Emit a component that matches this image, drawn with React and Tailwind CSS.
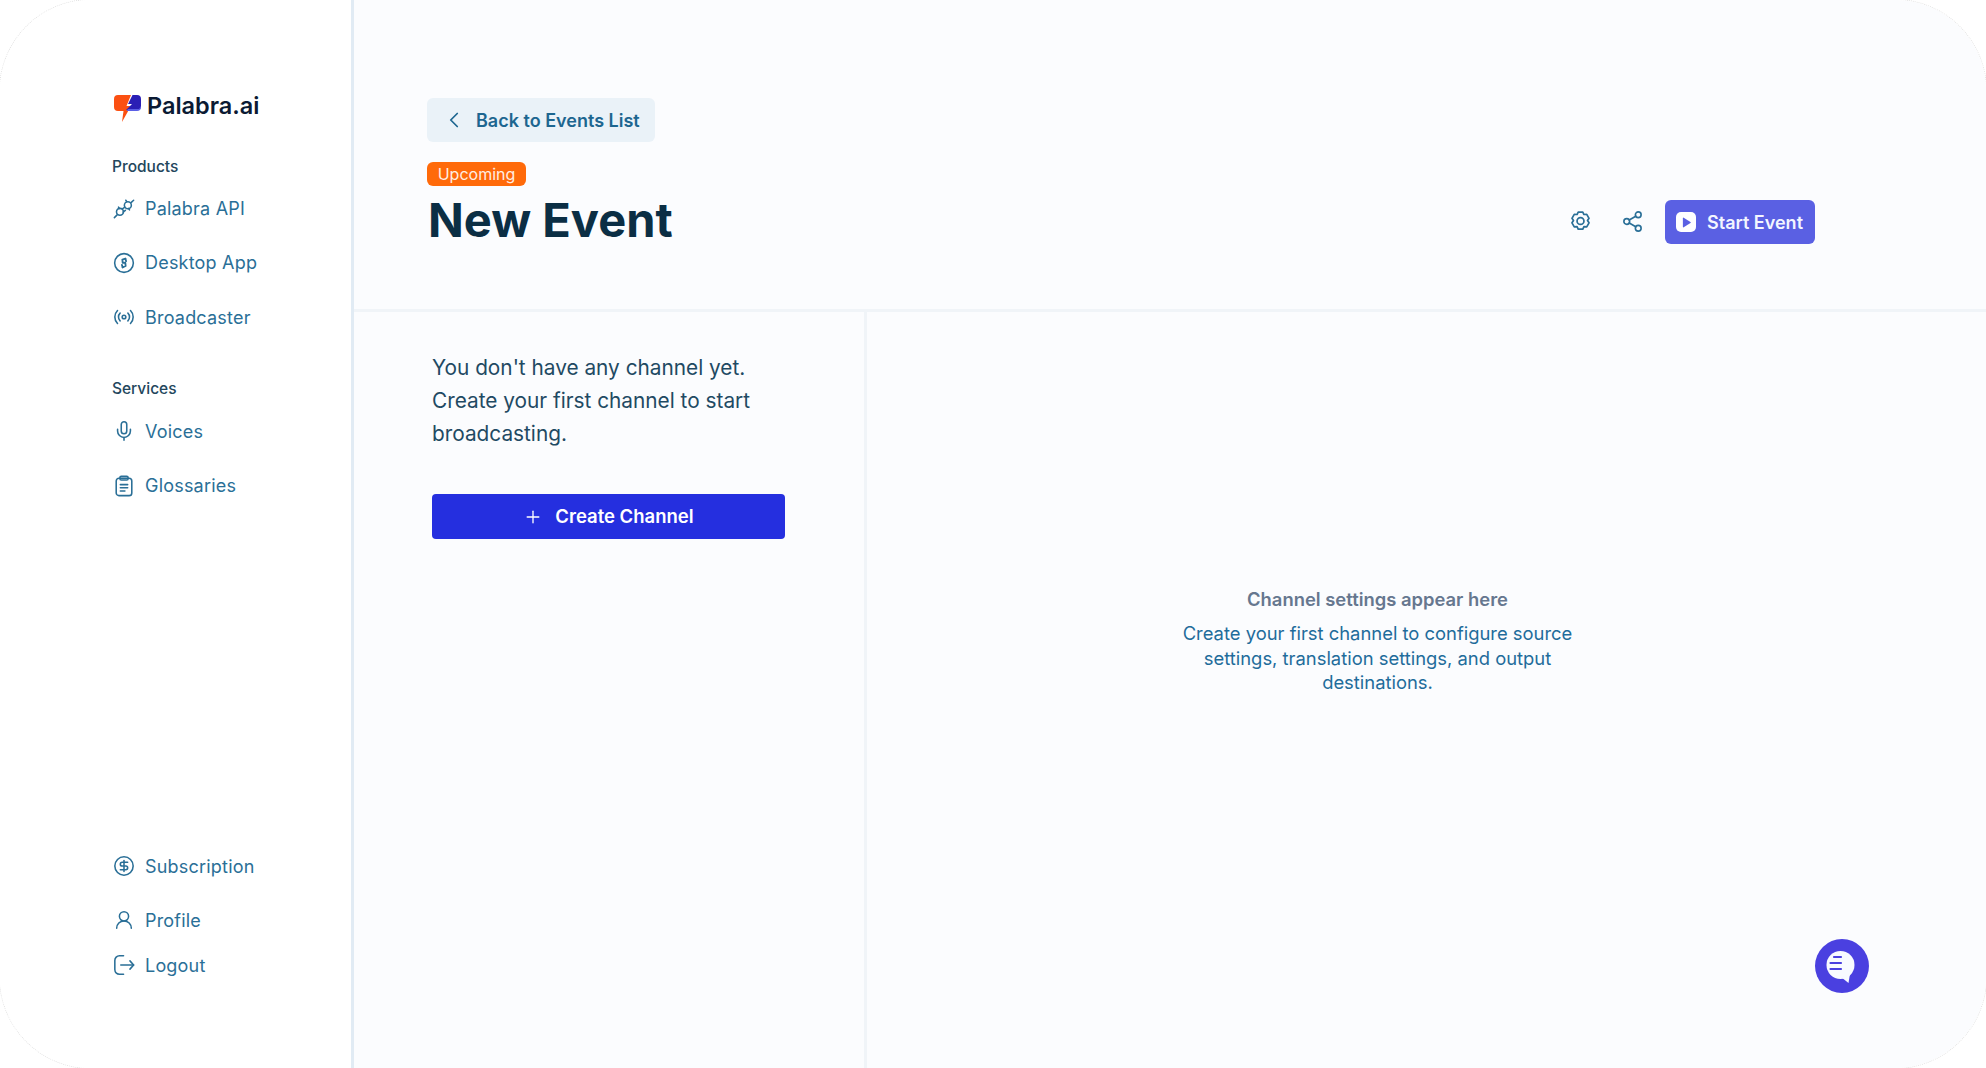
import React from "react";
import { ChevronLeft, Plus, Radio, Mic, CircleDollarSign, UserRound, Share2 } from "lucide-react";

const PlugIcon = (p) => (
  <svg viewBox="0 0 24 24" fill="none" stroke="currentColor" strokeWidth="1.7" strokeLinecap="round" strokeLinejoin="round" {...p}>
    <path d="M1.500 22.500l3-3" />
    <path d="M22.500 3.500l-2.800 2.600" />
    <circle cx="7.600" cy="16.200" r="3.800" />
    <circle cx="16.200" cy="9" r="3.800" />
    <path d="M10.200 13l2.800-2M11 16.500l2.500-2M6 11l1 1.500M18 14l-1-1.500M14 3.500l1 1.500" />
  </svg>
);
const DesktopIcon = (p) => (
  <svg viewBox="0 0 24 24" fill="none" stroke="currentColor" strokeWidth="1.8" strokeLinecap="round" strokeLinejoin="round" {...p}>
    <circle cx="12" cy="12" r="10.200" />
    <path d="M13.500 7.200l-3.300 1 .4 3.600 2.800-.3.400 3.800-3.300 1.400" strokeWidth="2" />
    <path d="M13.500 7.200l.8 2.800M10.500 16.700l-.8-2.700" strokeWidth="2" />
  </svg>
);
const GlossaryIcon = (p) => (
  <svg viewBox="0 0 24 24" fill="none" stroke="currentColor" strokeWidth="1.7" strokeLinecap="round" strokeLinejoin="round" {...p}>
    <rect x="3.500" y="3.500" width="17" height="19" rx="3" />
    <rect x="7.500" y="1.500" width="9" height="4" rx="1.500" />
    <path d="M8 10.500h8M8 14h8M8 17.500h5" />
  </svg>
);
const LogoutIcon = (p) => (
  <svg viewBox="0 0 24 24" fill="none" stroke="currentColor" strokeWidth="1.8" strokeLinecap="round" strokeLinejoin="round" {...p}>
    <path d="M11.500 2H7a5 5 0 0 0-5 5v10a5 5 0 0 0 5 5h4.500" />
    <path d="M8.500 12H22.500" />
    <path d="M18.500 7.500l4 4.500-4 4.500" />
  </svg>
);
const GearIcon = (p) => (
  <svg viewBox="0 0 24 24" fill="none" stroke="currentColor" strokeWidth="1.8" strokeLinecap="round" strokeLinejoin="round" {...p}>
    <path d="M9.600 2.200h4.800l1.200 2.500 2.900-.2 2.400 4.200-1.600 2.300 1.600 2.400-2.400 4.200-2.900-.2-1.200 2.600H9.600l-1.200-2.600-2.900.2-2.400-4.200 1.600-2.400-1.600-2.300 2.400-4.200 2.900.2z" />
    <circle cx="12" cy="11.500" r="3.600" />
  </svg>
);
const Logo = () => (
  <svg viewBox="0 0 27 29" className="w-[27px] h-[29px] shrink-0">
    <path d="M4 1h13l-4.500 11H17L8 28l1.500-11H4a4 4 0 0 1-4-4V5a4 4 0 0 1 4-4z" fill="#fb5012" />
    <path d="M18.500 1H23a4 4 0 0 1 4 4v7a4 4 0 0 1-4 4H12l6-6h-4z" fill="#2a1fb5" />
    <path d="M12.500 17H23a4 4 0 0 0 4-4v-1.500a3.500 3.500 0 0 1-4 3.500H14z" fill="#5b5fe6" />
  </svg>
);
const ChatIcon = () => (
  <svg viewBox="0 0 54 54" className="w-[54px] h-[54px]">
    <circle cx="27" cy="27" r="27" fill="#4a40e0" />
    <circle cx="25.500" cy="26" r="14" fill="#f8faff" />
    <path d="M26 38l7.500 6 1.500-9z" fill="#f8faff" />
    <path d="M19 18h7M15.500 24h10.500M15.500 30h10.500" stroke="#4a40e0" strokeWidth="2.200" strokeLinecap="round" />
  </svg>
);

const NavItem = ({ icon: Icon, label, className = "" }) => (
  <div className={`flex items-center h-[24px] text-[18px] tracking-[0.2px] text-[#2a6f97] ${className}`}>
    <span className="w-[33px] flex shrink-0 pl-[1px]"><Icon className="w-[22px] h-[22px]" strokeWidth={1.7} /></span>
    <span>{label}</span>
  </div>
);

export default function App() {
  return (
    <div className="w-[1986px] h-[1068px] bg-white overflow-hidden" style={{ fontFamily: "Inter, 'Liberation Sans', sans-serif" }}>
      <div className="w-[1988px] h-[1070px] -m-px rounded-[92px] overflow-hidden border border-dotted border-[#e2e2e2] flex">
        <aside className="w-[354px] shrink-0 h-full bg-white border-r-[3px] border-[#e1ebf4] flex flex-col pl-[112px] pt-[91px] pb-[91px]">
          <div className="flex items-center gap-[6px] h-[30px] text-[23.500px] font-semibold text-[#0b1a33] pl-[2px]">
            <span className="mt-[4px]"><Logo /></span>
            <span>Palabra.ai</span>
          </div>
          <div className="mt-[37px] text-[15.500px] font-medium text-[#23465c] leading-[18px]">Products</div>
          <div className="mt-[20px] flex flex-col gap-[30.500px]">
            <NavItem icon={PlugIcon} label="Palabra API" />
            <NavItem icon={DesktopIcon} label="Desktop App" />
            <NavItem icon={Radio} label="Broadcaster" />
          </div>
          <div className="mt-[51px] text-[15.500px] font-medium text-[#23465c] leading-[18px]">Services</div>
          <div className="mt-[21px] flex flex-col gap-[30.500px]">
            <NavItem icon={Mic} label="Voices" />
            <NavItem icon={GlossaryIcon} label="Glossaries" />
          </div>
          <div className="mt-auto flex flex-col">
            <NavItem icon={CircleDollarSign} label="Subscription" />
            <NavItem icon={UserRound} label="Profile" className="mt-[30px]" />
            <NavItem icon={LogoutIcon} label="Logout" className="mt-[21px]" />
          </div>
        </aside>
        <main className="flex-1 min-w-0 h-full bg-[#fbfcfe] flex flex-col relative">
          <header className="h-[312px] shrink-0 border-b-[3px] border-[#f0f4f8] pl-[73px] pr-[171px] pt-[98px] flex justify-between">
            <div className="flex flex-col items-start">
              <button className="w-[228px] h-[44px] rounded-[6px] bg-[#eaf2f8] flex items-center pl-[14px] text-[18px] font-semibold text-[#1d6690]">
                <ChevronLeft className="w-[26px] h-[26px] mr-[9px]" strokeWidth={1.6} />
                Back to Events List
              </button>
              <span className="mt-[20px] w-[99px] h-[24px] rounded-[6px] bg-[#ff6a0a] text-[#ffeee2] text-[16px] flex items-center justify-center leading-none">Upcoming</span>
              <h1 className="mt-[6px] ml-[1px] text-[47px] font-bold leading-[56px] text-[#0b2e44]">New Event</h1>
            </div>
            <div className="flex items-center gap-[30px] h-[44px] mt-[102px]">
              <GearIcon className="w-[23px] h-[23px] text-[#2a6f97] -mt-[1px]" />
              <Share2 className="w-[23px] h-[23px] text-[#2a6f97] -mt-[1px] -ml-[1px]" strokeWidth={1.7} />
              <button className="-ml-[9px] w-[150px] h-[44px] rounded-[6px] bg-[#5a60e3] flex items-center pl-[11px] gap-[11px] text-[18px] font-semibold text-[#f3f5ff]">
                <span className="w-[20px] h-[20px] rounded-[5px] bg-white flex items-center justify-center">
                  <svg viewBox="0 0 10 12" className="w-[9px] h-[11px]"><path d="M1 1.200v9.600a.6.6 0 0 0 .9.500l7.500-4.800a.6.6 0 0 0 0-1L1.900.700A.6.6 0 0 0 1 1.200z" fill="#5a60e3" /></svg>
                </span>
                Start Event
              </button>
            </div>
          </header>
          <div className="flex-1 flex min-h-0">
            <section className="w-[513px] shrink-0 border-r-[3px] border-[#f0f4f8] pl-[78px] pt-[39px]">
              <p className="w-[340px] text-[20.800px] leading-[33px] text-[#1f4a63]">You don't have any channel yet. Create your first channel to start broadcasting.</p>
              <button className="mt-[44px] w-[353px] h-[45px] rounded-[4px] bg-[#252fdf] flex items-center justify-center gap-[12px] text-[18.500px] font-semibold text-white">
                <Plus className="w-[20px] h-[20px]" strokeWidth={1.6} />
                Create Channel
              </button>
            </section>
            <section className="flex-1 flex flex-col items-center pr-[98px] pt-[275px] text-center">
              <div className="text-[18.400px] font-semibold leading-[24px] text-[#66778f]">Channel settings appear here</div>
              <p className="mt-[10px] w-[420px] text-[18.400px] leading-[24.500px] text-[#1f6c9b]">Create your first channel to configure source settings, translation settings, and output destinations.</p>
            </section>
          </div>
          <div className="absolute left-[1461px] top-[939px]"><ChatIcon /></div>
        </main>
      </div>
    </div>
  );
}
